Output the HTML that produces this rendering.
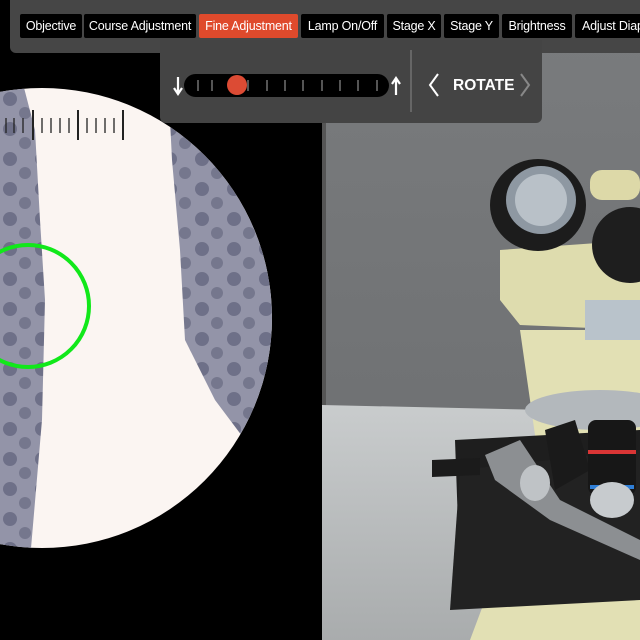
<!DOCTYPE html>
<html><head><meta charset="utf-8"><style>
body{margin:0;width:640px;height:640px;overflow:hidden;background:#000;font-family:"Liberation Sans",sans-serif;position:relative}
.p1{position:absolute;left:10px;top:-6px;width:640px;height:59px;background:#464646;border-radius:6px}
.btn{position:absolute;top:14px;height:24px;background:#000;color:#fff;font-size:12.5px;line-height:24px;text-align:center;border-radius:2px;white-space:nowrap;overflow:hidden;letter-spacing:-0.2px}
.p2{position:absolute;left:160px;top:40px;width:382px;height:83px;background:#444;border-radius:0 0 6px 6px}
</style></head><body>
<svg width="640" height="640" style="position:absolute;left:0;top:0">
<defs><clipPath id="c"><circle cx="42" cy="318" r="230"/></clipPath>
<pattern id="cells" width="32" height="30" patternUnits="userSpaceOnUse"><rect width="32" height="30" fill="#9394a8"/><circle cx="10" cy="9" r="7" fill="#6e7088"/><circle cx="25" cy="23" r="6" fill="#75778d"/></pattern>
<linearGradient id="wall" x1="0" y1="0" x2="0" y2="1"><stop offset="0" stop-color="#7a7c7e"/><stop offset="1" stop-color="#6a6c6e"/></linearGradient>
<linearGradient id="floor" x1="0" y1="0" x2="0" y2="1"><stop offset="0" stop-color="#c9cccd"/><stop offset="1" stop-color="#a9acad"/></linearGradient>
</defs>
<rect x="322" y="0" width="318" height="640" fill="url(#wall)"/>
<rect x="322" y="0" width="4" height="640" fill="#555"/>
<polygon points="322,405 640,412 640,640 322,640" fill="url(#floor)"/>
<g clip-path="url(#c)">
<rect x="-200" y="80" width="480" height="480" fill="#fbf5f2"/>
<path d="M-200,80 L22,80 L35,130 L40,220 L45,300 L42,420 L30,560 L-200,560Z" fill="url(#cells)"/>
<path d="M168,80 L172,160 L180,250 L185,340 L215,400 L245,440 L290,470 L290,80Z" fill="url(#cells)"/>
</g>
<circle cx="28" cy="306" r="61" fill="none" stroke="#11e81a" stroke-width="4"/>
<g stroke="#222" stroke-width="1.3">
<line x1="6" y1="118" x2="6" y2="133"/><line x1="14" y1="118" x2="14" y2="133"/><line x1="23" y1="118" x2="23" y2="133"/><line x1="33" y1="110" x2="33" y2="140" stroke-width="2"/><line x1="42" y1="118" x2="42" y2="133"/><line x1="51" y1="118" x2="51" y2="133"/><line x1="60" y1="118" x2="60" y2="133"/><line x1="69" y1="118" x2="69" y2="133"/><line x1="78" y1="110" x2="78" y2="140" stroke-width="2"/><line x1="87" y1="118" x2="87" y2="133"/><line x1="96" y1="118" x2="96" y2="133"/><line x1="105" y1="118" x2="105" y2="133"/><line x1="114" y1="118" x2="114" y2="133"/><line x1="123" y1="110" x2="123" y2="140" stroke-width="2"/>
</g>
<!-- microscope -->
<path d="M520,330 L640,330 L640,640 L470,640 L500,560 L540,470Z" fill="#e2e0b4"/>
<path d="M500,250 L640,240 L640,330 L520,325 L500,300Z" fill="#dedcae"/>
<rect x="585" y="300" width="55" height="40" fill="#b9c3cb"/>
<circle cx="630" cy="245" r="38" fill="#1e1e1e"/>
<rect x="590" y="170" width="50" height="30" rx="12" fill="#ddd9a8"/>
<ellipse cx="538" cy="205" rx="48" ry="46" fill="#1c1c1c"/>
<ellipse cx="541" cy="200" rx="35" ry="34" fill="#8e98a2"/>
<ellipse cx="541" cy="200" rx="26" ry="26" fill="#b9c1c8"/>
<ellipse cx="600" cy="410" rx="75" ry="20" fill="#b3b8bc"/>
<path d="M455,440 L640,430 L640,560 L460,580Z" fill="#1e1e1e"/>
<path d="M460,470 L640,450 L640,600 L450,610Z" fill="#222"/>
<path d="M432,460 L480,458 L480,475 L432,477Z" fill="#1b1b1b"/>
<path d="M485,455 L520,440 L560,500 L640,540 L640,560 L550,520 L495,480Z" fill="#8c8f92"/>
<path d="M545,430 L575,420 L590,470 L555,490Z" fill="#1a1a1a"/>
<ellipse cx="535" cy="483" rx="15" ry="18" fill="#bfc3c6"/>
<rect x="588" y="420" width="48" height="75" rx="8" fill="#171717"/>
<rect x="588" y="450" width="48" height="4" fill="#d93535"/>
<rect x="590" y="485" width="44" height="4" fill="#2f7ed6"/>
<ellipse cx="612" cy="500" rx="22" ry="18" fill="#c7cbce"/>
</svg>
<div class="p1"></div>
<div class="btn" style="left:20px;width:62px">Objective</div>
<div class="btn" style="left:84px;width:112px">Course Adjustment</div>
<div class="btn" style="left:199px;width:99px;background:#df4a2c">Fine Adjustment</div>
<div class="btn" style="left:301px;width:83px">Lamp On/Off</div>
<div class="btn" style="left:387px;width:54px">Stage X</div>
<div class="btn" style="left:444px;width:55px">Stage Y</div>
<div class="btn" style="left:502px;width:70px">Brightness</div>
<div class="btn" style="left:575px;width:80px;text-align:left;padding-left:7px">Adjust Diaphragm</div>
<div class="p2"></div>
<svg width="640" height="130" style="position:absolute;left:0;top:0">
<rect x="184" y="74" width="205" height="23" rx="11.5" fill="#000"/>
<g stroke="#aaa" stroke-width="1">
<line x1="198" y1="80" x2="198" y2="91"/><line x1="212" y1="80" x2="212" y2="91"/><line x1="248" y1="80" x2="248" y2="91"/><line x1="267" y1="80" x2="267" y2="91"/><line x1="285" y1="80" x2="285" y2="91"/><line x1="303" y1="80" x2="303" y2="91"/><line x1="322" y1="80" x2="322" y2="91"/><line x1="340" y1="80" x2="340" y2="91"/><line x1="358" y1="80" x2="358" y2="91"/><line x1="377" y1="80" x2="377" y2="91"/>
</g>
<circle cx="237" cy="85" r="10" fill="#dc4b34"/>
<path d="M178,77 L178,92 M174,88 L178,94 L182,88" stroke="#fff" stroke-width="2.2" fill="none"/>
<path d="M396,95 L396,80 M392,84 L396,78 L400,84" stroke="#fff" stroke-width="2.2" fill="none"/>
<line x1="411" y1="50" x2="411" y2="112" stroke="#888" stroke-width="1"/>
<path d="M438,74 L430,85 L438,96" stroke="#fff" stroke-width="2" fill="none"/>
<path d="M521,74 L529,85 L521,96" stroke="#888" stroke-width="2" fill="none"/>
<text x="453" y="90" fill="#fff" font-size="15.5" font-weight="bold" font-family="Liberation Sans">ROTATE</text>
</svg>
</body></html>
